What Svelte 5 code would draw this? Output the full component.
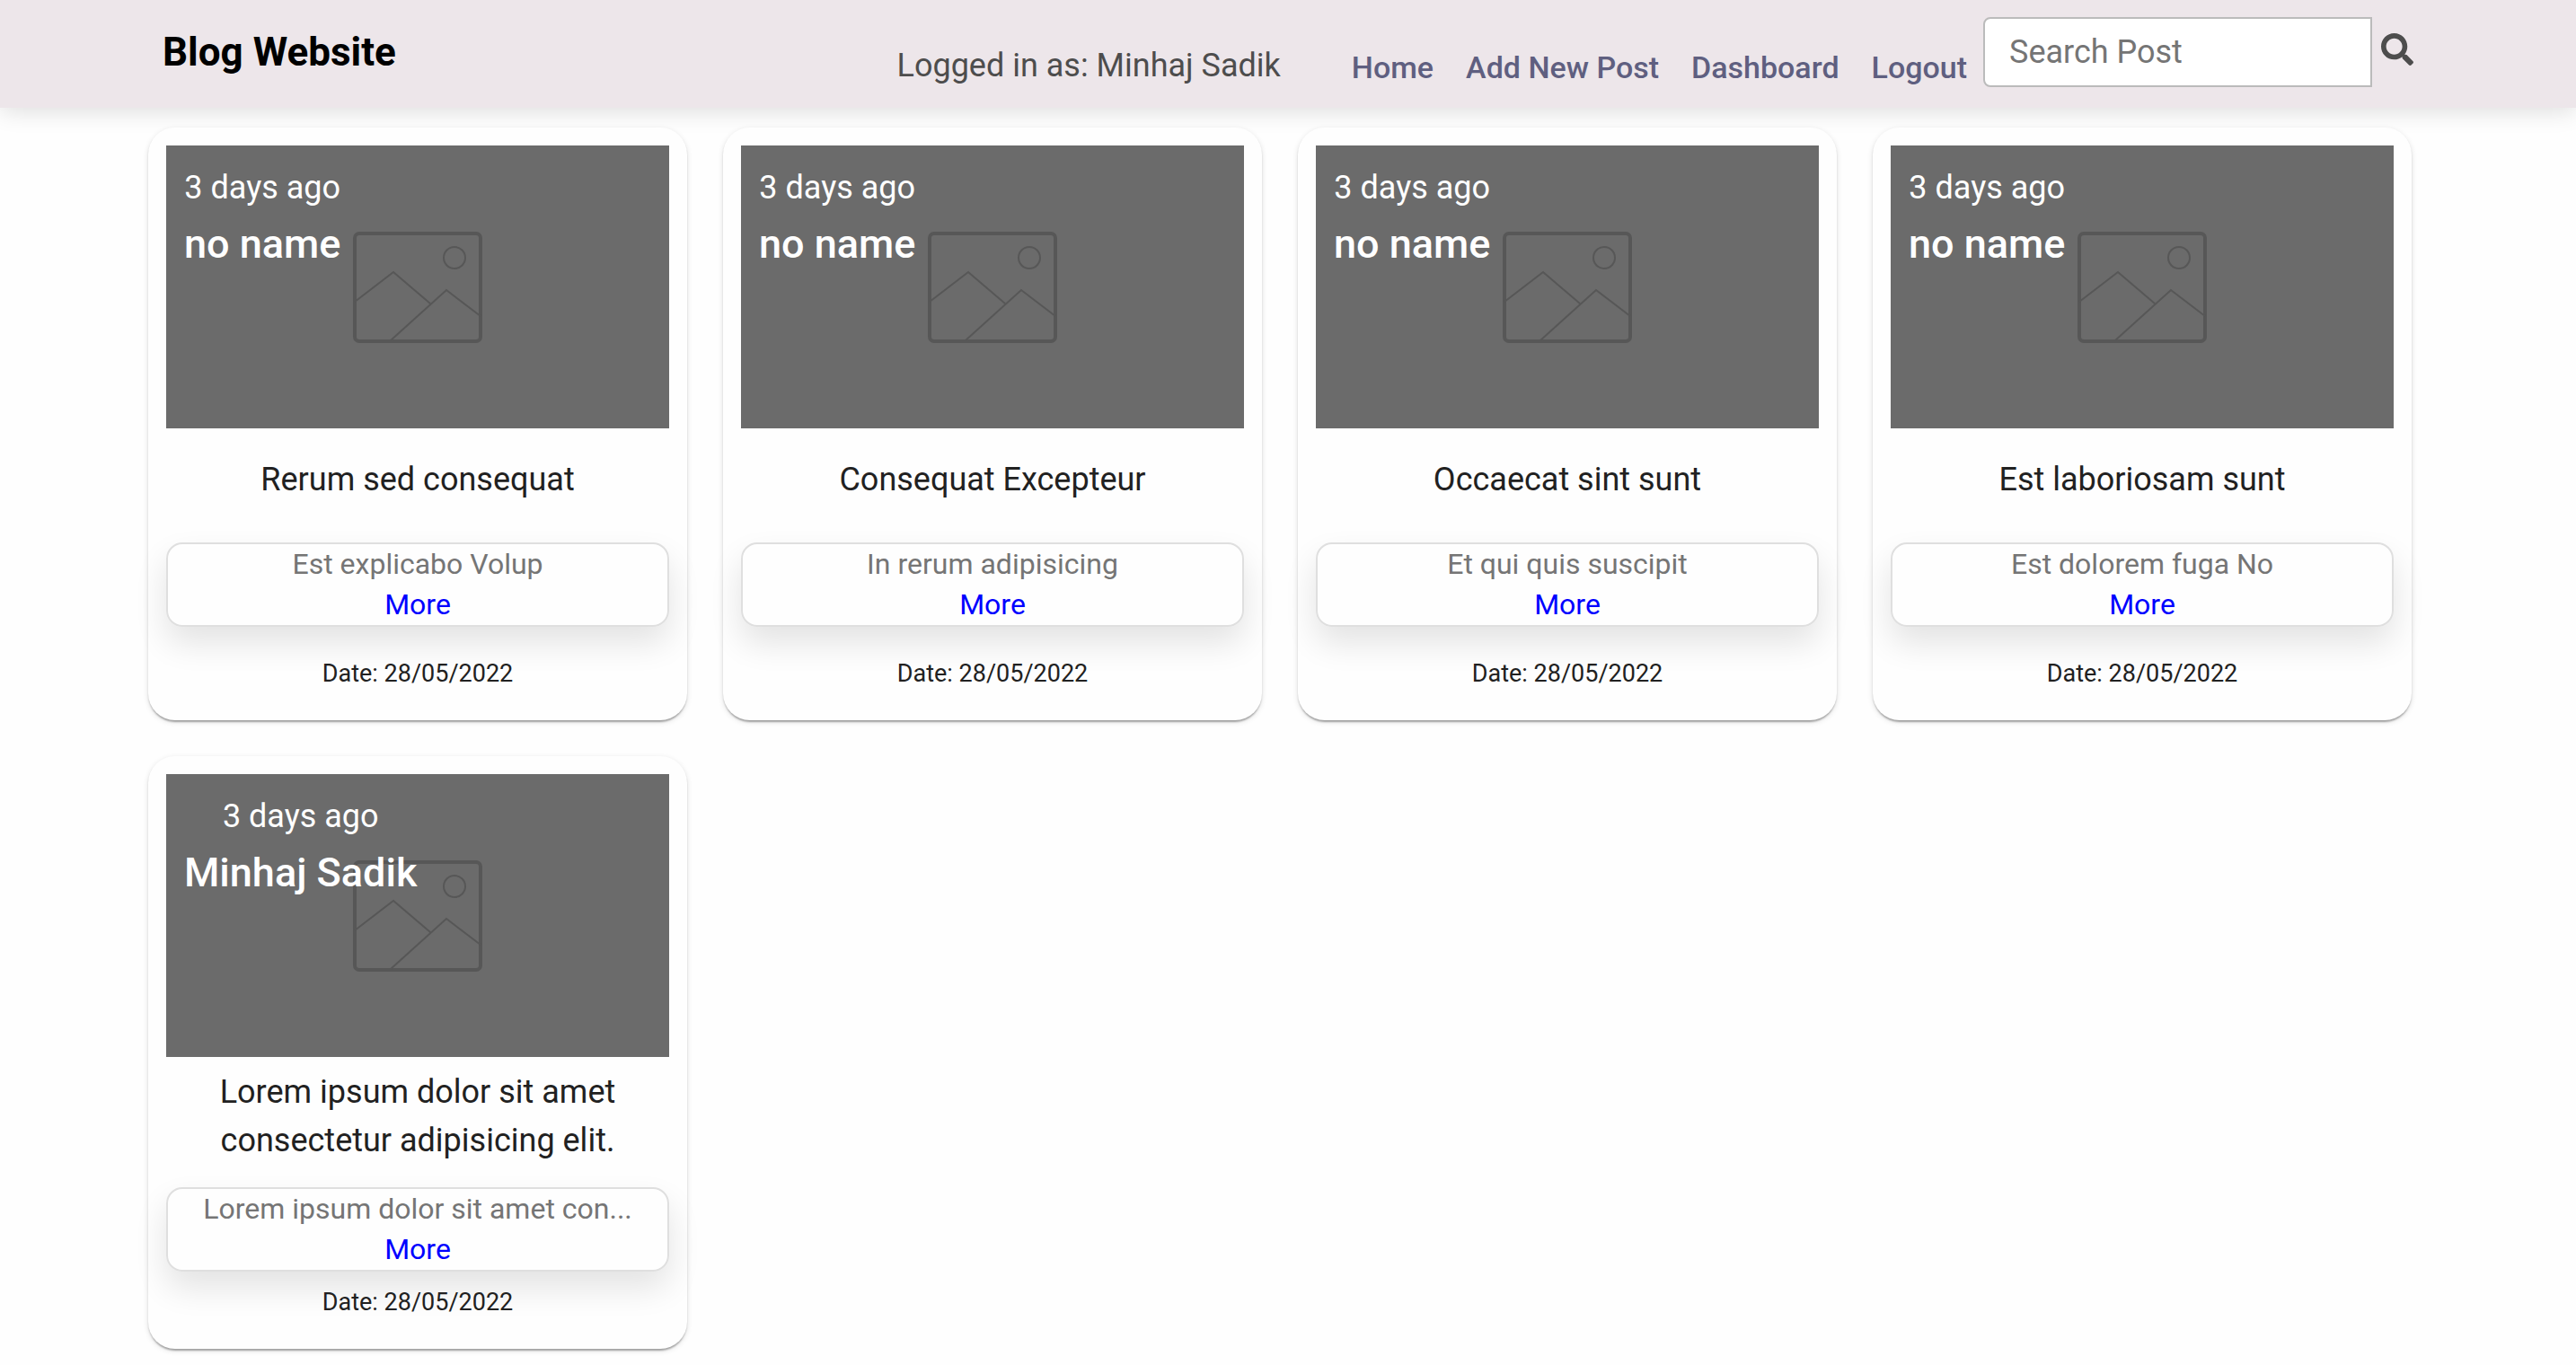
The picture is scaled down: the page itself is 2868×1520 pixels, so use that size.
<script>
  const links = ['Home', 'Add New Post', 'Dashboard', 'Logout'];

  const posts = [
    { author: 'no name', title: 'Rerum sed consequat', excerpt: 'Est explicabo Volup' },
    { author: 'no name', title: 'Consequat Excepteur', excerpt: 'In rerum adipisicing' },
    { author: 'no name', title: 'Occaecat sint sunt', excerpt: 'Et qui quis suscipit' },
    { author: 'no name', title: 'Est laboriosam sunt', excerpt: 'Est dolorem fuga No' },
    {
      author: 'Minhaj Sadik',
      title: 'Lorem ipsum dolor sit amet consectetur adipisicing elit.',
      excerpt: 'Lorem ipsum dolor sit amet con...'
    }
  ];

  let query = $state('');
</script>

<header class="navbar">
  <a class="brand" href="#home">Blog Website</a>
  <p class="user">Logged in as: Minhaj Sadik</p>
  <nav class="links">
    {#each links as link}
      <a href="#{link.toLowerCase().replaceAll(' ', '-')}">{link}</a>
    {/each}
  </nav>
  <form class="search" onsubmit={(e) => e.preventDefault()}>
    <input type="text" placeholder="Search Post" aria-label="Search Post" bind:value={query} />
    <button type="submit" aria-label="Search">
      <svg viewBox="0 0 512 512" aria-hidden="true">
        <path
          d="M505 442.700 405.300 343c-4.500-4.500-10.600-7-17-7H372c27.600-35.300 44-79.700 44-128C416 93.100 322.900 0 208 0S0 93.100 0 208s93.100 208 208 208c48.300 0 92.700-16.400 128-44v16.300c0 6.400 2.500 12.500 7 17l99.700 99.700c9.400 9.400 24.600 9.400 33.900 0l28.300-28.300c9.400-9.400 9.400-24.600.1-34zM208 336c-70.700 0-128-57.200-128-128 0-70.700 57.200-128 128-128 70.700 0 128 57.200 128 128 0 70.700-57.200 128-128 128z"
        />
      </svg>
    </button>
  </form>
</header>

<main class="grid">
  {#each posts as post}
    <article class="card">
      <div class="cover">
        <svg class="placeholder" viewBox="0 0 146 126" aria-hidden="true">
          <rect x="3" y="3" width="140" height="120" rx="5" stroke-width="4" />
          <g stroke-width="2">
            <circle cx="114" cy="30" r="12" />
            <path d="M3 79 46 46l41 35M43 122l62-56 38 29" />
          </g>
        </svg>
        <div class="meta">
          <span class="age">3 days ago</span>
          <span class="author">{post.author}</span>
        </div>
      </div>
      <div class="body">
        <h2>{post.title}</h2>
        <div class="excerpt">
          <p>{post.excerpt}</p>
          <a href="#post">More</a>
        </div>
      </div>
      <p class="date">Date: 28/05/2022</p>
    </article>
  {/each}
</main>

<style>
  :global(body) {
    margin: 0;
    background: #fefefe;
    font-family: Roboto, 'Liberation Sans', sans-serif;
  }

  h2,
  p {
    margin: 0;
    font-weight: 400;
  }

  a {
    text-decoration: none;
  }

  .navbar {
    display: flex;
    align-items: center;
    box-sizing: border-box;
    min-height: 120px;
    padding: 0 181px 4px;
    background: #ede6ea;
    box-shadow: 0 4px 24px rgba(0, 0, 0, 0.13);
  }

  .brand {
    margin-right: auto;
    color: #000;
    font-size: 44px;
    font-weight: 700;
  }

  .user {
    padding-top: 30px;
    margin-right: 79px;
    color: #4d4d4d;
    font-size: 36px;
  }

  .links {
    display: flex;
    gap: 36px;
    padding-top: 34px;
    margin-right: 18px;
  }

  .links a {
    color: #5f5f80;
    font-size: 34px;
    font-weight: 500;
  }

  .search {
    display: flex;
    align-items: center;
    gap: 10px;
  }

  .search input {
    box-sizing: border-box;
    width: 433px;
    height: 78px;
    padding: 0 27px;
    border: 2px solid #bbb;
    border-radius: 8px 0 0 8px;
    background: #fff;
    color: #222;
    font: 36px Roboto, 'Liberation Sans', sans-serif;
  }

  .search input::placeholder {
    color: #757575;
    opacity: 1;
  }

  .search button {
    display: flex;
    padding: 0 0 6px;
    border: 0;
    background: none;
    cursor: pointer;
  }

  .search svg {
    width: 36px;
    height: 36px;
    fill: #4d4d4d;
  }

  .grid {
    display: grid;
    grid-template-columns: repeat(4, 1fr);
    gap: 40px;
    padding: 22px 183px 18px 165px;
  }

  .card {
    position: relative;
    padding: 20px 20px 29px;
    border-radius: 30px;
    background: #fefefe;
    box-shadow:
      0 4px 2px -2px rgba(0, 0, 0, 0.2),
      0 2px 2px rgba(0, 0, 0, 0.14),
      0 2px 6px rgba(0, 0, 0, 0.12);
    text-align: center;
  }

  .cover {
    position: relative;
    display: flex;
    align-items: center;
    justify-content: center;
    height: 315px;
    background: #6b6b6b;
  }

  .placeholder {
    width: 146px;
    height: 126px;
    fill: none;
    stroke: #575757;
  }

  .meta {
    position: absolute;
    top: 20px;
    left: 20px;
    display: flex;
    flex-direction: column;
    color: #fff;
  }

  .age {
    font-size: 36px;
    line-height: 54px;
  }

  .author {
    font-size: 45px;
    font-weight: 500;
    line-height: 72px;
  }

  .body {
    display: flex;
    flex-direction: column;
    justify-content: space-evenly;
    min-height: 251px;
  }

  .body h2 {
    padding: 0 40px;
    margin-bottom: 13px;
    color: #212121;
    font-size: 36px;
    line-height: 54px;
  }

  .excerpt {
    border: 2px solid #dfdfdf;
    border-radius: 18px;
    box-shadow: 0 18px 36px rgba(0, 0, 0, 0.11);
    color: #757575;
    font-size: 32px;
    line-height: 45px;
  }

  .excerpt a {
    color: #00f;
  }

  .date {
    color: #212121;
    font-size: 27px;
    line-height: 45px;
  }
</style>
